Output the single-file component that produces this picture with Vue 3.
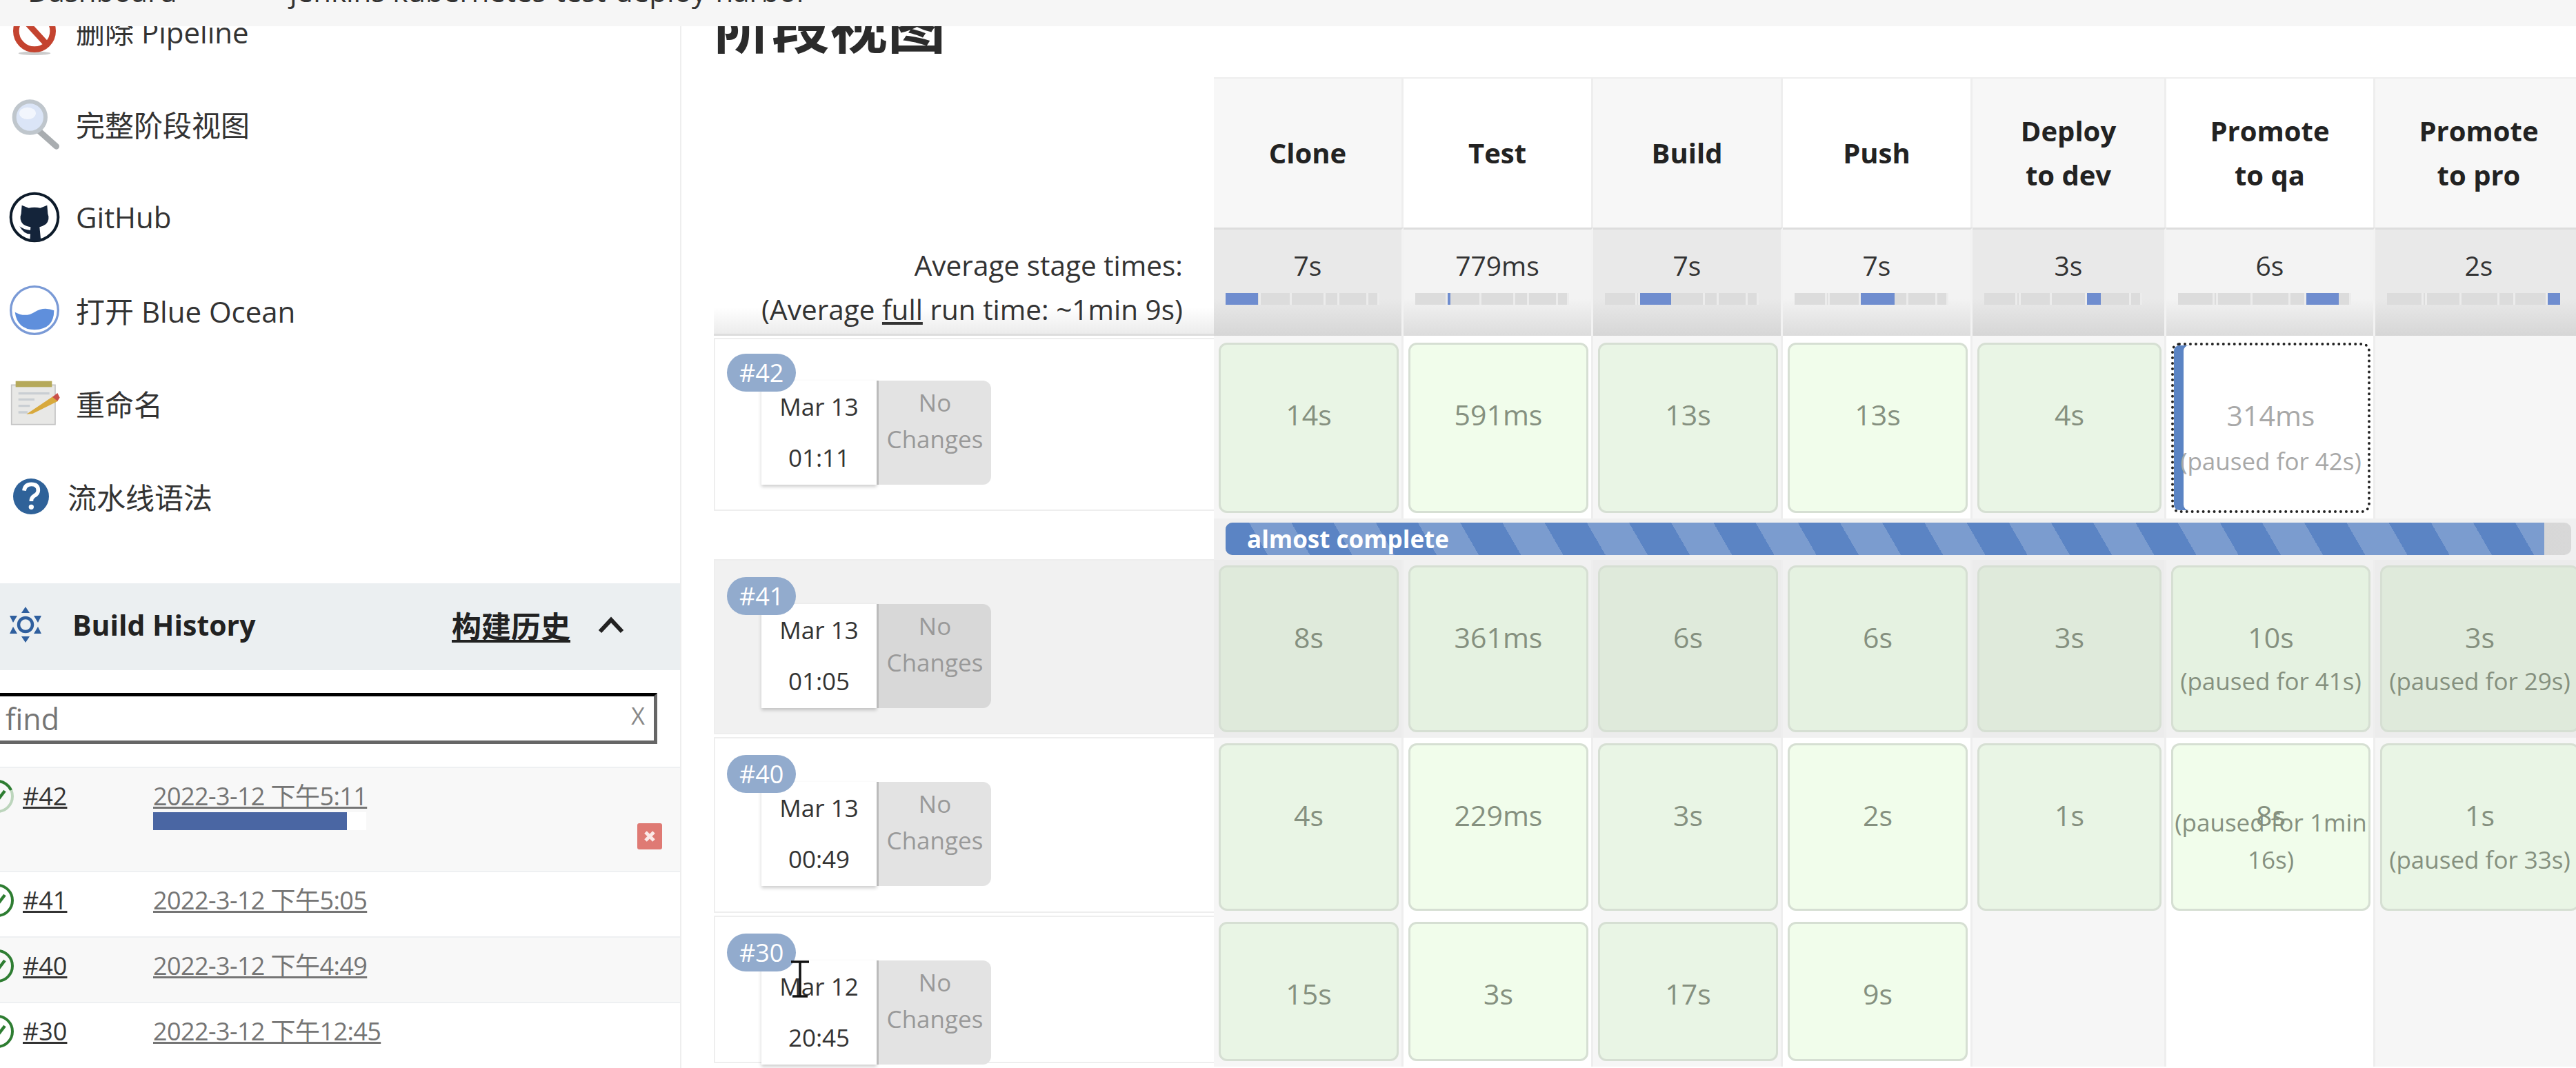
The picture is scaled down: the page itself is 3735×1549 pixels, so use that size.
<template>
  <div class="page">
    <div class="topbar">
      <span class="crumb">Dashboard</span>
      <span class="crumb crumb-job">jenkins kubernetes-test-deploy-harbor</span>
    </div>

    <aside class="sidebar">
      <ul class="menu">
        <li class="menu-item">
          <svg class="menu-icon" viewBox="0 0 330 330">
            <ellipse cx="150" cy="262" rx="70" ry="8" fill="#ccc" />
            <circle cx="150" cy="165" r="80" fill="#fff" stroke="#c4432f" stroke-width="26" />
            <path d="M95 105 L205 225" stroke="#c4432f" stroke-width="26" />
          </svg>
          <span>删除 Pipeline</span>
        </li>
        <li class="menu-item">
          <svg class="menu-icon" viewBox="0 0 330 330">
            <path d="M170 195 L245 262" stroke="#a9adb0" stroke-width="26" stroke-linecap="round" />
            <circle cx="130" cy="135" r="68" fill="#dbe5f7" stroke="#bfc6cc" stroke-width="18" />
            <ellipse cx="120" cy="118" rx="36" ry="26" fill="#f2f6fd" />
          </svg>
          <span>完整阶段视图</span>
        </li>
        <li class="menu-item">
          <svg class="menu-icon" viewBox="0 0 330 330">
            <circle cx="150" cy="165" r="103" fill="#fff" stroke="#0d1b2a" stroke-width="12" />
            <path fill="#14243a" d="M95 113 L125 125 Q150 120 175 125 L205 113 L208 150 Q218 175 200 195 Q185 205 172 208 L178 268 L130 268 L132 238 Q105 240 85 205 Q105 220 132 222 L133 208 Q110 203 100 195 Q82 175 92 150 Z" />
          </svg>
          <span>GitHub</span>
        </li>
        <li class="menu-item">
          <svg class="menu-icon" viewBox="0 0 330 330">
            <circle cx="150" cy="165" r="103" fill="#fff" stroke="#7a9ad6" stroke-width="10" />
            <path fill="#5f8fdc" d="M65 173 Q110 198 150 173 Q190 148 235 166 Q235 248 150 250 Q75 248 65 173 Z" />
          </svg>
          <span>打开 Blue Ocean</span>
        </li>
        <li class="menu-item">
          <svg class="menu-icon" viewBox="0 0 330 330">
            <rect x="50" y="85" width="190" height="172" fill="#e8e8e6" stroke="#c4c4c4" stroke-width="5" />
            <rect x="68" y="68" width="158" height="26" fill="#b5a95a" />
            <path d="M80 122 H215 M80 148 H150 M80 176 H130 M80 204 H120" stroke="#c9ced3" stroke-width="10" />
            <path d="M115 212 L230 135 L252 155 L142 210 Z" fill="#d8a93c" />
            <path d="M228 137 L250 120 L260 140 L250 155 Z" fill="#c9504a" />
          </svg>
          <span>重命名</span>
        </li>
        <li class="menu-item menu-help">
          <svg class="menu-icon help-icon" viewBox="0 0 330 330">
            <circle cx="135" cy="165" r="78" fill="#2f6299" />
            <path d="M105 140 Q108 112 136 112 Q166 112 166 138 Q166 154 148 163 Q136 170 136 186" fill="none" stroke="#fff" stroke-width="17" />
            <circle cx="136" cy="211" r="11" fill="#fff" />
          </svg>
          <span>流水线语法</span>
        </li>
      </ul>

      <section class="history">
        <header class="history-head">
          <svg class="gear" viewBox="0 0 54 54">
            <circle cx="27" cy="27" r="10" fill="none" stroke="#2f5f9e" stroke-width="4.5" />
            <path fill="#2f5f9e" d="M27 1 L33 10 H21 Z M27 53 L33 44 H21 Z M4 14 L15 14 L9 24 Z M50 14 L39 14 L45 24 Z M4 40 L15 40 L9 30 Z M50 40 L39 40 L45 30 Z" />
          </svg>
          <span class="history-title">Build History</span>
          <a class="history-link">构建历史</a>
          <svg class="chevron" viewBox="0 0 40 28">
            <path d="M4 24 L20 7 L36 24" fill="none" stroke="#222" stroke-width="6" />
          </svg>
        </header>

        <div class="find">
          <input class="find-input" placeholder="find" />
          <span class="find-clear">X</span>
        </div>

        <div
          v-for="(b, i) in builds"
          :key="b.id"
          class="build"
          :class="{ zebra: i % 2 === 0, running: b.running }"
        >
          <svg class="status" viewBox="0 0 50 50">
            <circle cx="25" cy="25" r="22" fill="none" :stroke="b.running ? '#bcd5bc' : '#2e7d32'" stroke-width="4" />
            <path v-if="b.running" d="M25 3 A22 22 0 0 1 45 16" fill="none" stroke="#2e7d32" stroke-width="4" />
            <path d="M14 25 L23 34 L36 17" fill="none" stroke="#2e7d32" stroke-width="4.5" />
          </svg>
          <a class="build-no">#{{ b.id }}</a>
          <div>
            <a class="build-date">{{ b.date }}</a>
            <div v-if="b.running" class="build-progress"><div class="build-progress-fill"></div></div>
          </div>
          <svg v-if="b.running" class="build-stop" viewBox="0 0 36 38">
            <rect width="36" height="38" rx="3" fill="#df7a74" />
            <path d="M12 13 L24 25 M24 13 L12 25" stroke="#fbe9e8" stroke-width="5" />
          </svg>
        </div>
      </section>
    </aside>

    <main class="main">
      <h1 class="title">阶段视图</h1>
      <div class="stage">
        <div class="blank"></div>
        <div
          v-for="(s, i) in stages"
          :key="s.name.join()"
          class="stage-head"
          :class="{ alt: i % 2 }"
        >
          <span v-for="line in s.name" :key="line">{{ line }}</span>
        </div>

        <div class="avg-label">
          <div>Average stage times:</div>
          <div>(Average <u>full</u> run time: ~1min 9s)</div>
        </div>
        <div
          v-for="(s, i) in stages"
          :key="'avg' + i"
          class="avg"
          :class="{ alt: i % 2 }"
        >
          <div class="avg-time">{{ s.avg }}</div>
          <div class="avg-bar">
            <span
              v-for="(w, j) in segments"
              :key="j"
              class="seg"
              :class="{ on: j === i }"
              :style="{ width: w + '%' }"
            ></span>
          </div>
        </div>

        <template v-for="(run, r) in runs" :key="run.id">
          <div class="run-info" :class="{ first: r === 0, hover: run.hover }">
            <span class="badge">#{{ run.id }}</span>
            <div class="when">
              <div>{{ run.day }}</div>
              <div>{{ run.time }}</div>
            </div>
            <div class="changes">No<br />Changes</div>
          </div>
          <div
            v-for="(c, i) in run.cells"
            :key="i"
            class="cell"
            :class="{ alt: i % 2, hover: run.hover, first: r === 0 }"
          >
            <div v-if="c" class="box" :class="{ live: c.live }">
              <div class="box-time">{{ c.t }}</div>
              <div v-if="c.p" class="box-pause">(paused for {{ c.p }})</div>
            </div>
          </div>
          <template v-if="r === 0">
            <div class="blank"></div>
            <div class="progress-row">
              <div class="progress">
                <div class="progress-fill">almost complete</div>
              </div>
            </div>
          </template>
        </template>
      </div>
    </main>

    <svg class="cursor" viewBox="0 0 30 54">
      <path d="M2 2 H28 M15 2 V52 M4 52 H26" stroke="#111" stroke-width="3.5" fill="none" />
    </svg>
  </div>
</template>

<script setup>
const builds = [
  { id: 42, date: '2022-3-12 下午5:11', running: true },
  { id: 41, date: '2022-3-12 下午5:05' },
  { id: 40, date: '2022-3-12 下午4:49' },
  { id: 30, date: '2022-3-12 下午12:45' },
]

const stages = [
  { name: ['Clone'], avg: '7s' },
  { name: ['Test'], avg: '779ms' },
  { name: ['Build'], avg: '7s' },
  { name: ['Push'], avg: '7s' },
  { name: ['Deploy', 'to dev'], avg: '3s' },
  { name: ['Promote', 'to qa'], avg: '6s' },
  { name: ['Promote', 'to pro'], avg: '2s' },
]

const segments = [21, 2, 20, 22, 9, 19, 7]

const runs = [
  {
    id: 42, day: 'Mar 13', time: '01:11',
    cells: [
      { t: '14s' }, { t: '591ms' }, { t: '13s' }, { t: '13s' }, { t: '4s' },
      { t: '314ms', p: '42s', live: true }, null,
    ],
  },
  {
    id: 41, day: 'Mar 13', time: '01:05', hover: true,
    cells: [
      { t: '8s' }, { t: '361ms' }, { t: '6s' }, { t: '6s' }, { t: '3s' },
      { t: '10s', p: '41s' }, { t: '3s', p: '29s' },
    ],
  },
  {
    id: 40, day: 'Mar 13', time: '00:49',
    cells: [
      { t: '4s' }, { t: '229ms' }, { t: '3s' }, { t: '2s' }, { t: '1s' },
      { t: '8s', p: '1min 16s' }, { t: '1s', p: '33s' },
    ],
  },
  {
    id: 30, day: 'Mar 12', time: '20:45',
    cells: [{ t: '15s' }, { t: '3s' }, { t: '17s' }, { t: '9s' }, null, null, null],
  },
]
</script>

<style>
html, body { overflow: hidden; background: #fff; }
</style>

<style scoped>
.page { position: relative; display: flex; width: 3735px; height: 1549px; overflow: hidden; background: #fff; color: #333; font-family: "Open Sans", "Noto Sans CJK SC", sans-serif; font-size: 40px; }

.topbar { position: absolute; top: 0; left: 0; right: 0; height: 38px; z-index: 5; overflow: hidden; background: #f6f6f6; font-size: 42px; line-height: 50px; white-space: nowrap; }
.crumb { position: absolute; top: -38px; left: 40px; color: #333; }
.crumb-job { left: 420px; }

.sidebar { flex: none; width: 986px; border-right: 2px solid #eee; }
.menu { list-style: none; margin: -23px 0 0; padding: 0; }
.menu-item { display: flex; align-items: center; height: 135px; font-size: 42px; }
.menu-icon { flex: none; width: 110px; height: 110px; }
.help-icon { margin-right: -12px; }

.history { margin-top: 59px; }
.history-head { display: flex; align-items: center; box-sizing: border-box; height: 126px; padding-bottom: 6px; background: #ebeff1; font-weight: 700; font-size: 41px; color: #222; }
.gear { flex: none; width: 54px; height: 54px; margin: 0 41px 0 10px; }
.history-title { width: 550px; }
.history-link { text-decoration: underline; font-size: 43px; }
.chevron { width: 40px; height: 28px; margin-left: 39px; }

.find { position: relative; margin: 33px 33px 33px -10px; }
.find-input { display: block; box-sizing: border-box; width: 100%; height: 74px; padding: 0 50px 0 13px; border: 5px solid #000; border-bottom-color: #666; border-right-color: #666; border-radius: 0; outline: none; font: inherit; font-size: 43px; }
.find-input::placeholder { color: #757575; opacity: 1; }
.find-clear { position: absolute; right: 18px; top: 10px; color: #888; font-size: 34px; }

.build { position: relative; display: grid; grid-template-columns: 50px 177px 1fr; column-gap: 12px; align-items: start; box-sizing: border-box; height: 95px; margin-left: -29px; padding: 16px 0 0; border-top: 2px solid #eef0f2; font-size: 36px; line-height: 50px; }
.build.running { height: 151px; }
.build.zebra { background: #f8f8f8; }
.status { width: 50px; height: 50px; }
.build-no { color: #333; text-decoration: underline; }
.build-date { color: #757575; text-decoration: underline; white-space: nowrap; letter-spacing: -0.6px; }
.build-progress { width: 309px; height: 26px; margin-top: -2px; background: #fff; }
.build-progress-fill { width: 91%; height: 100%; background: #4a66a3; }
.build-stop { position: absolute; right: 26px; top: 80px; width: 36px; height: 38px; }

.main { flex: none; padding-left: 47px; }
.title { margin: 0 0 36px; font-size: 84px; line-height: 76px; font-weight: 700; color: #2b2b2b; }

.stage { display: grid; grid-template-columns: 725px 275px 275px 275px 275px 281px 303px 303px; grid-template-rows: 218px 157px 265px 60px 258px 259px 218px; }
.stage-head { display: flex; flex-direction: column; align-items: center; justify-content: center; background: #f7f7f7; border-top: 2px solid #eee; border-right: 3px solid #eee; font-weight: 700; font-size: 40px; line-height: 64px; color: #222; }
.stage-head.alt { background: #fff; }

.avg-label { padding-top: 23px; padding-right: 45px; text-align: right; line-height: 64px; font-size: 40.5px; background: linear-gradient(#fff 75%, #ececec); border-bottom: 3px solid #ddd; }
.avg { padding: 22px 32px 0 17px; text-align: center; background: linear-gradient(#e9e9e9 65%, #d6d6d6); border-right: 3px solid #f2f2f2; border-top: 3px solid #ddd; }
.avg.alt { background: linear-gradient(#f3f3f3 65%, #dcdcdc); }
.avg-time { margin-right: -15px; line-height: 60px; font-size: 39px; color: #333; }
.avg-bar { display: flex; height: 17px; margin-top: 10px; }
.seg { box-sizing: border-box; height: 100%; background: #dcdcdc; border-right: 3px solid #ececec; }
.seg.on { background: #6f8dcf; border-right: none; }

.run-info { position: relative; display: flex; align-items: flex-start; box-sizing: border-box; margin: -1px 0 5px; padding: 63px 0 0 67px; border: 2px solid #eee; border-right: none; font-size: 35px; }
.run-info.first { margin: 3px 0 11px; padding-top: 60px; }
.run-info.hover { background: #f1f1f1; }
.badge { position: absolute; z-index: 2; top: 24px; left: 17px; padding: 0 18px; height: 55px; line-height: 55px; border-radius: 28px; background: #92abcd; color: #fff; font-size: 36px; }
.run-info.first .badge { top: 21px; }
.when { box-sizing: border-box; width: 167px; height: 151px; padding-top: 1px; background: #fff; box-shadow: 0 3px 5px rgba(0, 0, 0, .2); text-align: center; line-height: 74px; }
.changes { box-sizing: border-box; width: 166px; height: 151px; padding-top: 5px; background: #e3e3e3; border-left: 3px solid #bbb; border-radius: 0 12px 12px 0; color: #999; text-align: center; line-height: 53px; }
.run-info.hover .changes { background: #d8d8d8; }

.cell { box-sizing: border-box; padding: 8px 7px; background: #f6f6f6; box-shadow: inset -3px 0 0 #eee; }
.cell.first { padding-top: 10px; }
.cell.alt { background: #fff; }
.cell.hover { background: #ececec; }
.cell.hover.alt { background: #f1f1f1; }

.box { position: relative; box-sizing: border-box; height: 100%; padding-top: 67px; border: 3px solid #d6dfd3; border-radius: 12px; background: #e9f5e5; color: #85907f; text-align: center; line-height: 68px; font-size: 41px; }
.cell.alt .box { background: #f1fdeb; }
.cell.hover .box { background: #dfeadb; }
.cell.hover.alt .box { background: #e5f2e1; }
.cell .box.live { background: #fff; border: 4px dotted #222; color: #a8a8a8; box-shadow: inset 14px 0 0 #5b84c4; }
.box-pause { position: absolute; left: -6px; right: -6px; bottom: 44px; line-height: 54px; font-size: 35px; }

.blank { min-width: 0; }
.progress-row { grid-column: 2 / -1; box-sizing: border-box; padding: 6px 19px 7px 17px; background: #f0f0f0; }
.progress { height: 47px; border-radius: 10px; overflow: hidden; background: linear-gradient(90deg, #aaa, #d8d8d8); }
.progress-fill { box-sizing: border-box; width: 98%; height: 100%; padding-left: 31px; background: repeating-linear-gradient(60deg, #5b84c4 0 53px, #7b9ccf 53px 106px); color: #fff; font-weight: 700; font-size: 35px; line-height: 47px; }

.cursor { position: absolute; left: 1145px; top: 1393px; width: 30px; height: 54px; z-index: 4; }
</style>
